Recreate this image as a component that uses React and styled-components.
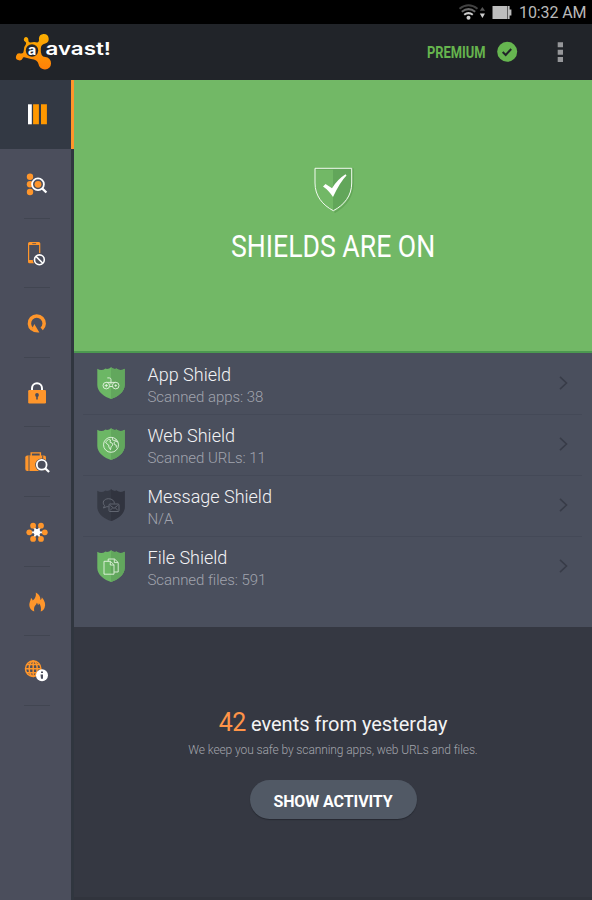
import React from "react";
import styled, { createGlobalStyle } from "styled-components";

const Global = createGlobalStyle`
  html, body { margin: 0; padding: 0; background: #353842; }
  * { box-sizing: border-box; }
`;

const Screen = styled.div`
  width: 592px;
  height: 900px;
  display: flex;
  flex-direction: column;
  overflow: hidden;
  background: #353842;
  font-family: Roboto, "Open Sans", sans-serif;
`;

const StatusBar = styled.div`
  height: 24px;
  flex: none;
  background: #000;
  display: flex;
  justify-content: flex-end;
  align-items: center;
  padding-right: 6px;
`;

const Clock = styled.span`
  width: 67px;
  margin-left: 7px;
  padding-top: 2px;
  font-size: 16px;
  line-height: 24px;
  color: #b9b9b9;
  white-space: nowrap;
  letter-spacing: -0.1px;
`;

const Header = styled.header`
  height: 56px;
  flex: none;
  background: #212429;
  display: flex;
  align-items: center;
  justify-content: space-between;
`;

const HeaderActions = styled.div`
  display: flex;
  align-items: center;
`;

const Fitted = styled.span`
  display: block;
  width: ${(p) => p.$width}px;
  white-space: nowrap;
  transform: scaleX(${(p) => p.$scale});
  transform-origin: 0 50%;
`;

const Premium = styled(Fitted)`
  padding-top: 2px;
  font-size: 16.5px;
  line-height: 20px;
  font-weight: 700;
  color: #66b44e;
`;

const Body = styled.div`
  flex: 1;
  display: flex;
  min-height: 0;
`;

const Sidebar = styled.nav`
  width: 74px;
  flex: none;
  background: #4b4e5c;
  border-right: 3px solid #30363f;
`;

const NavItem = styled.div`
  width: ${(p) => (p.$active ? 74 : 71)}px;
  height: ${(p) => (p.$active ? 69 : 69.6)}px;
  background: ${(p) => (p.$active ? "#333944" : "transparent")};
  border-right: ${(p) => (p.$active ? "3px solid #ff962b" : "none")};
  display: flex;
  flex-direction: column;
  align-items: center;
`;

const NavIcon = styled.svg`
  display: block;
  width: 71px;
  height: 68.6px;
  flex: none;
`;

const NavRule = styled.div`
  width: 26px;
  height: 1px;
  margin-left: 3px;
  background: #414551;
`;

const Main = styled.main`
  flex: 1;
  display: flex;
  flex-direction: column;
`;

const Hero = styled.section`
  height: 273px;
  flex: none;
  background: #72b866;
  border-bottom: 2px solid #4c9950;
  display: flex;
  flex-direction: column;
  align-items: center;
  padding-top: 85px;
`;

const HeroTitle = styled(Fitted)`
  margin-top: 14px;
  font-size: 31.5px;
  line-height: 40px;
  color: #fff;
`;

const List = styled.section`
  height: 274px;
  flex: none;
  background: #4a4f5d;
  padding: 1px 10px 0 9px;
`;

const Row = styled.div`
  height: 61px;
  display: flex;
  border-bottom: ${(p) => (p.$last ? "none" : "1px solid #444957")};
`;

const ShieldIcon = styled.svg`
  display: block;
  width: 28px;
  height: 32px;
  margin: 13px 0 0 14px;
  flex: none;
`;

const RowText = styled.div`
  flex: 1;
  margin-left: 22.5px;
  padding-top: 10px;
`;

const RowTitle = styled.div`
  font-size: 18px;
  line-height: 22px;
  font-weight: 300;
  color: #f3f3f5;
`;

const RowMeta = styled.div`
  font-size: 15px;
  line-height: 22px;
  font-weight: 300;
  color: #a1a4ae;
  letter-spacing: -0.06px;
`;

const Chevron = styled.svg`
  display: block;
  width: 9px;
  height: 14px;
  margin: 22px 14px 0 0;
`;

const Activity = styled.section`
  flex: 1;
  background: #353842;
  border-bottom: 3px solid #31343d;
  display: flex;
  flex-direction: column;
  align-items: center;
  padding-top: 81px;
`;

const Events = styled.div`
  display: flex;
  align-items: baseline;
  font-size: 20px;
  line-height: 30px;
  color: #f3f3f4;
  white-space: pre;
`;

const Count = styled.span`
  font-size: 25px;
  font-weight: 400;
  letter-spacing: -0.4px;
  color: #ff9448;
  margin-right: 5px;
`;

const Note = styled.div`
  margin-top: 3px;
  font-size: 12px;
  line-height: 16px;
  font-weight: 300;
  letter-spacing: -0.1px;
  color: #a3a5ac;
  white-space: nowrap;
`;

const Button = styled.button`
  width: 167px;
  height: 39px;
  margin-top: 22px;
  padding: 4px 0 0;
  border: 0;
  border-radius: 20px;
  background: #515965;
  box-shadow: 0 1px 1px #262931;
  color: #fff;
  font: 700 16px/20px Roboto, sans-serif;
  letter-spacing: -0.1px;
`;

const O = "#ff962b";
const BG = "#4b4e5c";

const Lens = ({ x, y, r, fill }) => (
  <g stroke="#fff" fill="none">
    <path d={`M${x + r * 0.7} ${y + r * 0.7}L${x + r + 2.5} ${y + r + 2.3}`} strokeWidth="2.3" />
    <circle cx={x} cy={y} r={r} strokeWidth="1.8" fill={fill} />
  </g>
);

const navIcons = [
  <g>
    <path fill="#fff" d="M28 104.3h3.8v20H28z" />
    <path fill="#ff9800" d="M33.1 104.3h5.8v20h-5.8zM41 104.3h5.9v20H41z" />
  </g>,
  <g>
    <g fill={O}>
      <circle cx="30" cy="176.7" r="3.2" />
      <circle cx="30" cy="184.2" r="3.2" />
      <circle cx="30" cy="192" r="3.2" />
    </g>
    <Lens x={38} y={184.3} r={5.9} fill={BG} />
    <circle cx="38" cy="184.3" r="3.4" fill={O} />
  </g>,
  <g>
    <path fill={O} fillRule="evenodd" d="M29.5 241.5h9.3q1.5 0 1.5 1.5v18.3q0 1.5-1.5 1.5h-9.3q-1.5 0-1.5-1.5v-18.3q0-1.5 1.5-1.5zM29.2 244.7v14.8h9.9v-14.8z" />
    <path stroke={BG} strokeWidth=".8" d="M32.3 243.2h3.8" />
    <circle cx="39.4" cy="259.4" r="6.7" fill={BG} />
    <g fill="none" stroke="#fff" strokeWidth="1.6">
      <circle cx="39.4" cy="259.4" r="4.9" />
      <path d="M36 256l6.8 6.8" />
    </g>
  </g>,
  <g>
    <path d="M32 329.2A7.400 7.400 0 1 1 41.700 329.100" fill="none" stroke={O} strokeWidth="3.500" />
    <path d="M34.300 324.200L39.400 332.700Q34.200 333.300 30.200 329.900L32.400 328.400Z" fill={O} />
  </g>,
  <g>
    <path d="M32 391v-3a5 5 0 0 1 10 0v3" fill="none" stroke="#fff" strokeWidth="2" />
    <rect x="28.2" y="389.8" width="17.8" height="13.4" rx="1.2" fill={O} />
    <circle cx="37" cy="394.8" r="1.9" fill={BG} />
    <path d="M37 395v4.2" stroke={BG} strokeWidth="1.6" />
  </g>,
  <g>
    <path d="M31.2 456.500v-3.200h9.200v3.200" fill="none" stroke={O} strokeWidth="1.4" />
    <rect x="25.3" y="456" width="20.7" height="15.3" rx="2" fill={O} />
    <path d="M29 456v15.3M42.7 456v15.3" stroke={BG} strokeWidth=".9" />
    <circle cx="41.7" cy="465.4" r="6.5" fill={BG} />
    <path d="M45 468l3.400 4" stroke={BG} strokeWidth="4" />
    <Lens x={41.7} y={465.2} r={4.9} fill={BG} />
  </g>,
  <g>
    <path d="M33 525.7l8 13.2M41 525.7l-8 13.2M29.5 532.3h15" stroke="#fff" strokeWidth="1.8" />
    <circle cx="37" cy="532.3" r="3.2" fill="#fff" />
    <g fill={O}>
      {[[33.1, 525.7], [41, 525.7], [29.3, 532.3], [44.8, 532.3], [33.1, 538.9], [41, 538.9]].map(([x, y]) => (
        <circle key={`${x}-${y}`} cx={x} cy={y} r="2.9" />
      ))}
    </g>
  </g>,
  <path
    fill={O}
    d="M35.8 592c3.5 1.700 4.700 4.100 4.600 7.600.9-.6 1.400-1.500 1.400-2.800 3.200 3.500 4.200 7.300 2.700 10.700-.8 1.800-2 2.900-3.800 3.700.8-3 .1-6.700-1.800-8.300-.1 1-.4 1.600-.9 2-.2-1.300-.6-2.100-1.200-2.600-.2 2.200-2.500 3-2.700 5.300-.1 1.300-.1 2.400.2 3.600-3.200-1.200-5-3.800-5-6.700 0-2.500 1.300-4 1.700-6.900 1 .7 1.500 1.600 1.700 2.500 2.700-2.200 3.600-4.600 3.100-8.100z"
  />,
  <g>
    <g fill="none" stroke={O} strokeWidth="1.500">
      <circle cx="33.200" cy="668.900" r="7.700" />
      <ellipse cx="33.200" cy="668.900" rx="4" ry="7.700" />
      <path d="M33.200 661v16M25.500 668.900h15.400M27 664.800h12.400M27 673h12.400" />
    </g>
    <circle cx="42" cy="675.400" r="6" fill="#fff" />
    <path d="M41 671.800h2v1.500h-2zM40.500 674.600h2.500v4.300h-2z" fill={BG} />
  </g>,
];

const glyphs = {
  app: (
    <g>
      <path d="M14 15v-2.500q0-1.600-1.700-1.600h-2M14 15.200v2.200" />
      <path d="M9.500 15.400h9M12.600 19.500h3" />
      <circle cx="9.300" cy="18.600" r="3.300" />
      <circle cx="18.700" cy="18.600" r="3.300" />
      <path d="M7.700 18.600h3.200M9.300 17v3.200M17.500 18.600h2.400M18.700 17.400v2.400" />
    </g>
  ),
  web: (
    <g>
      <circle cx="14" cy="16.800" r="7.500" />
      <path d="M8.500 14l3-2.600 2 .6-.5 2.200 2 .8.900 2-1.800 1.700-.6 3-1.600-2.600-.200-2-1.600-1zM15.500 9.600l-.2 2.200 1.900.7 2.500-.6M20.900 14l-2.300-.7-1.700 1.400.8 2 1.500.4.2 2.500" />
    </g>
  ),
  message: (
    <g>
      <path d="M11.500 17.700H9.700L6.500 19l1-2.500C4.600 13.500 7 9.800 11.400 9.700c4 0 6 2.400 6 4.700" />
      <rect x="12" y="15" width="10" height="7.500" rx="1" />
      <path d="M13.300 16.400l3.700 3 3.700-3M13.300 21l2.400-2M20.700 21l-2.400-2" />
    </g>
  ),
  file: (
    <g>
      <path d="M11.200 11.300V9h6.300l3.700 3.500V22h-4" />
      <path d="M7 11.300h6.500l3.500 3.500v9.400H7zM13.300 11.500v3.500H17M17.300 9.200v3.400H21" />
    </g>
  ),
};

const outline = "M.3 1.800Q4.300 4.500 8.500 1.600L10 2Q12.500 1.900 14 .3Q15.500 1.900 18 2L19.500 1.600Q23.700 4.500 27.700 1.800V18C27.700 25 20.500 29.900 14 32C7.500 29.900.3 25 .3 18Z";

const shields = [
  { id: "app", title: "App Shield", meta: "Scanned apps: 38", on: true },
  { id: "web", title: "Web Shield", meta: "Scanned URLs: 11", on: true },
  { id: "message", title: "Message Shield", meta: "N/A", on: false },
  { id: "file", title: "File Shield", meta: "Scanned files: 591", on: true },
];

const LogoSvg = styled.svg`
  display: block;
  margin-left: 14px;
`;

const Logo = () => (
  <LogoSvg width="104" height="44" viewBox="14 30 104 44">
    <defs>
      <linearGradient id="amber" x1="0" y1="0" x2="0" y2="1">
        <stop offset="0" stopColor="#fbb000" />
        <stop offset="1" stopColor="#ff7f08" />
      </linearGradient>
    </defs>
    <path
      fill="url(#amber)"
      d="M25.800 37A2.500 2.500 0 0 1 28.300 40Q28.200 42.800 30.500 42.400Q35 41.800 37.300 42.500Q39.500 41.800 38.900 38.500A4.900 4.900 0 1 1 45.200 43.500Q40.800 44.500 40.800 48.500Q40.200 56.800 45.300 57A6.300 6.300 0 1 1 38.500 64Q37.500 59.500 31 59Q26.500 58 24.300 57.200Q22.700 57 22.600 58.400A3.500 3.500 0 1 1 20.500 53.500Q23.600 54 23.700 51Q23.700 46.500 25.800 44.500Q26.800 42.500 25.200 41.700A2.500 2.500 0 0 1 25.800 37Z"
    />
    <circle cx="32" cy="50.500" r="6.200" fill="#24262a" />
    <text x="28" y="54.500" fontSize="14" fontWeight="700" fontFamily="Inter, sans-serif" fill="#fff" textLength="8.300" lengthAdjust="spacingAndGlyphs">a</text>
    <text x="45.500" y="55.200" fontSize="17.500" fontWeight="600" fontFamily="Inter, sans-serif" fill="#fff" textLength="65.500" lengthAdjust="spacingAndGlyphs">avast!</text>
  </LogoSvg>
);

const StatusIcons = () => (
  <svg width="54" height="24" viewBox="458 0 54 24">
    <g fill="none" strokeWidth="2">
      <path d="M459.500 8.800Q468.500 1.800 477.500 8.800" stroke="#424242" />
      <path d="M461.800 11.800Q468.500 6.500 475.200 11.800" stroke="#686868" />
      <path d="M464.200 14.800Q468.500 11.400 472.800 14.800" stroke="#ccc" />
    </g>
    <circle cx="468.500" cy="17.800" r="2" fill="#ccc" />
    <path d="M482.400 7l2.600 3.800h-5.200z" fill="#555" />
    <path d="M482.400 18l2.600-4.500h-5.200z" fill="#ccc" />
    <path d="M492.500 6h15v13h-15z" fill="#bdbdbd" />
    <path d="M508 6h1.600v3.400h1.800v6h-1.800V19H508z" fill="#bdbdbd" />
  </svg>
);

export default function App() {
  return (
    <Screen>
      <Global />
      <StatusBar>
        <StatusIcons />
        <Clock>10:32 AM</Clock>
      </StatusBar>
      <Header>
        <Logo />
        <HeaderActions>
          <Premium $width={70} $scale={0.78}>PREMIUM</Premium>
          <svg width="95" height="56" viewBox="497 24 95 56">
            <circle cx="507.200" cy="51.800" r="10" fill="#66b650" />
            <path d="M502.700 52l3 3 5.500-6" fill="none" stroke="#212429" strokeWidth="2" />
            <path d="M557.700 42.200h5.300v5h-5.300zM557.700 49.800h5.300v5h-5.300zM557.700 57h5.300v5h-5.300z" fill="#96979a" />
          </svg>
        </HeaderActions>
      </Header>
      <Body>
        <Sidebar>
          {navIcons.map((icon, i) => (
            <NavItem key={i} $active={i === 0}>
              <NavIcon viewBox={`0 ${i === 0 ? 80 : 149 + (i - 1) * 69.6} 71 68.6`}>{icon}</NavIcon>
              {i > 0 && <NavRule />}
            </NavItem>
          ))}
        </Sidebar>
        <Main>
          <Hero>
            <svg width="42" height="48" viewBox="312 165 42 48">
              <path d="M316 169h37v14q0 19-18.500 29.500" fill="none" stroke="#519146" strokeOpacity=".45" strokeWidth="1.500" />
              <path d="M333 168.300h18.600v14.700c0 13-7.600 22-18.600 27.700z" fill="#62a65a" />
              <path d="M315 168.300h36.700v14.700c0 13-7.600 22-18.400 27.700C322.600 205 315 196 315 183z" fill="none" stroke="#f2faf0" strokeWidth="1" />
              <path d="M323 186.500l2.500-2.500 6.500 4.300q5.500-9 13.500-14l1 1.300q-6.500 6.500-13.500 21.500-4.500-7-10-10.600z" fill="#fff" />
            </svg>
            <HeroTitle $width={204} $scale={0.845}>SHIELDS ARE ON</HeroTitle>
          </Hero>
          <List>
            {shields.map((s, i) => (
              <Row key={s.id} $last={i === shields.length - 1}>
                <ShieldIcon viewBox="0 0 28 32">
                  <path d={outline} fill={s.on ? "#6cb765" : "#363a45"} />
                  <path d="M14 .3Q15.500 1.900 18 2L19.500 1.600Q23.700 4.500 27.700 1.800V18C27.700 25 20.500 29.900 14 32Z" fill={s.on ? "#62a75d" : "#31343f"} />
                  <g fill="none" stroke={s.on ? "#e4f4e1" : "#666b76"} strokeWidth=".9">{glyphs[s.id]}</g>
                </ShieldIcon>
                <RowText>
                  <RowTitle>{s.title}</RowTitle>
                  <RowMeta>{s.meta}</RowMeta>
                </RowText>
                <Chevron viewBox="0 0 9 14">
                  <path d="M1 .8l6.500 6.200L1 13.200" fill="none" stroke="#383c48" strokeWidth="1.600" />
                </Chevron>
              </Row>
            ))}
          </List>
          <Activity>
            <Events>
              <Count>42</Count>
              <span>events from yesterday</span>
            </Events>
            <Note>We keep you safe by scanning apps, web URLs and files.</Note>
            <Button>SHOW ACTIVITY</Button>
          </Activity>
        </Main>
      </Body>
    </Screen>
  );
}
